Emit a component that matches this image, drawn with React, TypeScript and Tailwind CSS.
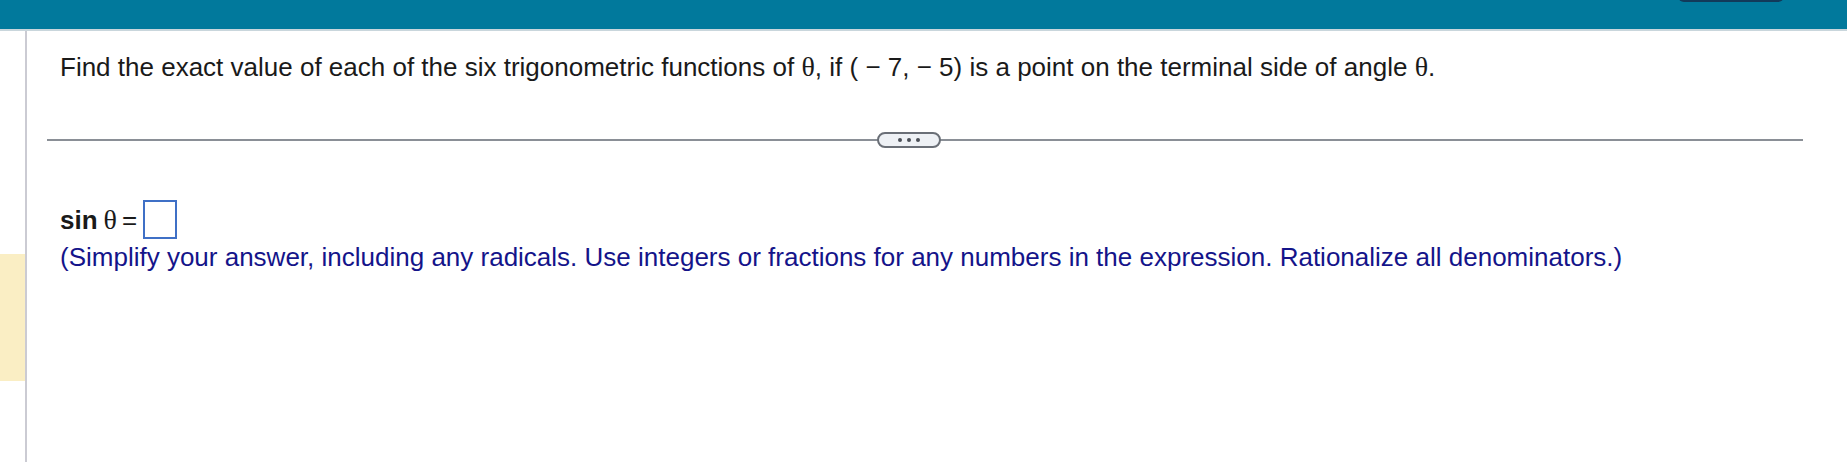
const font = { fontFamily: '"Liberation Sans", Arial, sans-serif' };

export default function App() {
  return (
    <div className="w-[1847px] h-[462px] bg-white overflow-hidden" style={font}>
      <div className="relative h-[31px] bg-[#01799c] border-b-2 border-[#c9d6dc]">
        <div className="absolute left-[1678px] top-[-10px] w-[106px] h-[12px] rounded-full bg-[#123a5a]" />
      </div>
      <div className="flex h-[431px]">
        <div className="w-[25px] shrink-0">
          <div className="mt-[223px] h-[127px] bg-[#faeec4]" />
        </div>
        <div className="w-[2px] shrink-0 bg-[#cbcbd3]" />
        <div className="pl-[20px] pr-[44px] flex-1">
          <div className="pl-[13px] pt-[21px] text-[26px] leading-[30px] text-[#1a1a1a]">
            Find the exact value of each of the six trigonometric functions of{" "}
            <span className="font-['Liberation_Serif'] text-[28px] leading-none">θ</span>, if ( − 7, − 5) is a point on the terminal side of angle{" "}
            <span className="font-['Liberation_Serif'] text-[28px] leading-none">θ</span>.
          </div>
          <div className="relative mt-[57px] h-[2px] bg-[#8a8f96]">
            <div className="absolute left-[830px] top-[-7px] w-[64px] h-[16px] rounded-full border-2 border-[#6a6f77] bg-[#eef1f5] flex items-center justify-center gap-[5px]">
              <span className="w-[4px] h-[4px] rounded-full bg-[#4a4f57]" />
              <span className="w-[4px] h-[4px] rounded-full bg-[#4a4f57]" />
              <span className="w-[4px] h-[4px] rounded-full bg-[#4a4f57]" />
            </div>
          </div>
          <div className="pl-[13px] pt-[59px] flex items-center text-[26px] leading-[30px] text-[#1a1a1a]">
            <span className="font-bold">sin</span>
            <span className="ml-[6px] font-['Liberation_Serif'] text-[28px]">θ</span>
            <span className="ml-[5px]">=</span>
            <span className="ml-[6px] w-[34px] h-[39px] border-2 border-[#3f70c6]" />
          </div>
          <div className="pl-[13px] mt-[3px] text-[26px] leading-[30px] text-[#14148a]">
            (Simplify your answer, including any radicals. Use integers or fractions for any numbers in the expression. Rationalize all denominators.)
          </div>
        </div>
      </div>
    </div>
  );
}
